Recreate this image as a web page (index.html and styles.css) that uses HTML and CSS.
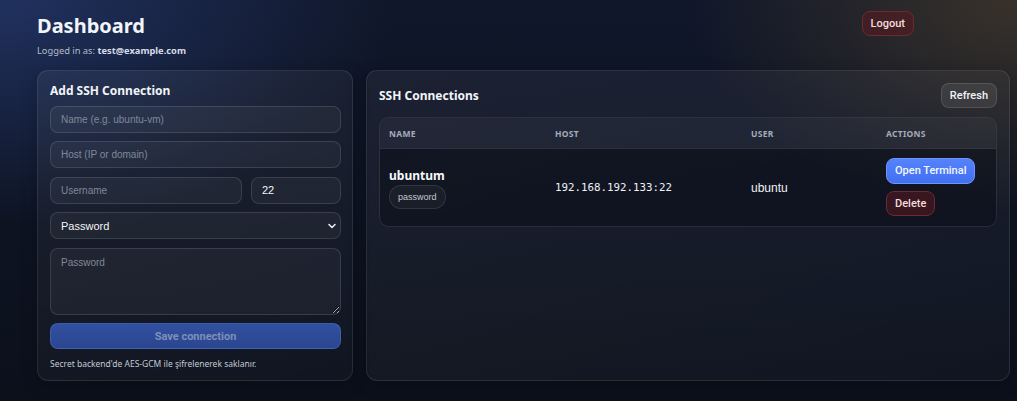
FILE: index.html
```html
<!DOCTYPE html>
<html lang="en">
<head>
    <meta charset="UTF-8">
    <meta name="viewport" content="width=device-width, initial-scale=1.0">
    <title>Dashboard</title>
    <link rel="stylesheet" href="styles.css">
</head>
<body>

    <div class="topbar">
        <div>
            <h1 class="title">Dashboard</h1>
            <div class="whoami">Logged in as: <b>test@example.com</b></div>
        </div>
        <button class="btn btn-danger logout">Logout</button>
    </div>

    <div class="layout">
        <!-- Form -->
        <div class="card form-card">
            <h2 class="card-title">Add SSH Connection</h2>
            <input class="field" type="text" placeholder="Name (e.g. ubuntu-vm)">
            <input class="field" type="text" placeholder="Host (IP or domain)">
            <div class="field-row">
                <input class="field" type="text" placeholder="Username">
                <input class="field port" type="text" value="22">
            </div>
            <div class="select-wrap">
                <select class="field">
                    <option>Password</option>
                    <option>Private key</option>
                </select>
                <svg class="chevron" width="10" height="10" viewBox="0 0 10 10"><path d="M2 3.5 L5 6.5 L8 3.5" fill="none" stroke="#e5e7eb" stroke-width="1.6" stroke-linecap="round" stroke-linejoin="round"/></svg>
            </div>
            <textarea class="field secret" placeholder="Password"></textarea>
            <button class="btn-save" disabled>Save connection</button>
            <p class="hint">Secret backend'de AES-GCM ile şifrelenerek saklanır.</p>
        </div>

        <!-- List -->
        <div class="card list-card">
            <div class="list-head">
                <h2 class="card-title">SSH Connections</h2>
                <button class="btn btn-ghost">Refresh</button>
            </div>
            <div class="table">
                <div class="t-row t-head">
                    <div>Name</div>
                    <div>Host</div>
                    <div>User</div>
                    <div>Actions</div>
                </div>
                <div class="t-row t-body">
                    <div>
                        <div class="conn-name">ubuntum</div>
                        <span class="pill">password</span>
                    </div>
                    <div class="mono">192.168.192.133:22</div>
                    <div class="user">ubuntu</div>
                    <div class="actions">
                        <button class="btn btn-primary">Open Terminal</button>
                        <button class="btn btn-danger">Delete</button>
                    </div>
                </div>
            </div>
        </div>
    </div>

</body>
</html>
```

FILE: styles.css
```css
html, body {
    height: 100%;
}

body {
    margin: 0;
    padding: 14px 8px 0 37px;
    box-sizing: border-box;
    font-family: 'Noto Sans', 'Open Sans', sans-serif;
    color: #e5e7eb;
    background:
        radial-gradient(ellipse 560px 320px at 0% 0%, rgba(38, 58, 112, 0.75), transparent 70%),
        radial-gradient(ellipse 440px 280px at 100% 0%, rgba(72, 60, 42, 0.72), transparent 75%),
        linear-gradient(180deg, #10172a 0%, #0b101b 100%);
    overflow: hidden;
}

button, input, select, textarea {
    font-family: 'Liberation Sans', Arial, sans-serif;
}

/* header */
.topbar {
    display: flex;
    justify-content: space-between;
    align-items: flex-start;
}

.title {
    margin: 0;
    font-size: 20px;
    line-height: 24px;
    font-weight: 700;
    color: #f1f5f9;
}

.whoami {
    margin-top: 6px;
    font-size: 9.3px;
    color: #b4bccb;
}

.whoami b {
    color: #d6dce6;
}

.logout {
    margin-top: -3px;
    margin-right: 95px;
}

/* layout */
.layout {
    display: grid;
    grid-template-columns: 316px 1fr;
    gap: 13px;
    margin-top: 13px;
    height: 311px;
}

.card {
    border: 1px solid rgba(255, 255, 255, 0.09);
    border-radius: 11px;
    background: linear-gradient(160deg, rgba(255, 255, 255, 0.055), rgba(255, 255, 255, 0.025));
    box-shadow: 0 4px 16px rgba(0, 0, 0, 0.25);
    box-sizing: border-box;
}

.card-title {
    margin: 0;
    font-size: 12px;
    line-height: 18px;
    font-weight: 700;
    color: #f1f5f9;
}

/* form */
.form-card {
    display: flex;
    flex-direction: column;
    gap: 8.5px;
    padding: 11px 11px 0 12px;
}

.form-card .card-title {
    margin-bottom: -3px;
}

.field {
    box-sizing: border-box;
    width: 100%;
    height: 27px;
    padding: 0 10px;
    border: 1px solid rgba(255, 255, 255, 0.12);
    border-radius: 8px;
    background: rgba(255, 255, 255, 0.045);
    color: #f1f5f9;
    font-size: 10px;
    outline: none;
}

.field::placeholder {
    color: #7f889a;
}

.port {
    font-size: 11px;
}

.field-row {
    display: grid;
    grid-template-columns: 1fr 90px;
    gap: 9px;
}

.select-wrap {
    position: relative;
}

.select-wrap select {
    appearance: none;
    -webkit-appearance: none;
    color: #f3f4f6;
    font-size: 11px;
}

.select-wrap option {
    background: #1a2030;
}

.chevron {
    position: absolute;
    right: 4px;
    top: 9px;
    pointer-events: none;
}

.secret {
    height: 67px;
    padding: 8px 10px;
    resize: vertical;
}

.btn-save {
    height: 26px;
    border: 1px solid rgba(96, 130, 220, 0.35);
    border-radius: 8px;
    background: linear-gradient(180deg, #3150a0, #2b4690);
    color: #7f8fb8;
    font-family: Roboto, 'Liberation Sans', sans-serif;
    font-size: 11px;
    font-weight: 700;
}

.hint {
    margin: 0;
    font-size: 8.5px;
    color: #c2c9d6;
}

/* list */
.list-card {
    padding: 12px 12px 0 12px;
    margin-right: -1px;
}

.list-head {
    display: flex;
    justify-content: space-between;
    align-items: center;
}

.table {
    margin-top: 9px;
    border: 1px solid rgba(255, 255, 255, 0.08);
    border-radius: 10px;
    overflow: hidden;
}

.t-row {
    display: grid;
    grid-template-columns: 166px 196px 135px 1fr;
    align-items: center;
}

.t-row > div {
    padding: 0 9px;
}

.t-head {
    height: 30px;
    background: rgba(255, 255, 255, 0.035);
    border-bottom: 1px solid rgba(255, 255, 255, 0.05);
    font-size: 8.5px;
    font-weight: 700;
    letter-spacing: 0.3px;
    text-transform: uppercase;
    color: #a4acba;
}

.t-body {
    height: 77px;
    background: rgba(8, 11, 20, 0.45);
    font-size: 12px;
}

.conn-name {
    font-size: 12px;
    font-weight: 700;
    color: #f8fafc;
}

.pill {
    display: inline-block;
    margin-top: 1px;
    padding: 6px 8px;
    border: 1px solid rgba(255, 255, 255, 0.1);
    border-radius: 12px;
    background: rgba(255, 255, 255, 0.04);
    font-family: 'Liberation Sans', Arial, sans-serif;
    font-size: 9px;
    color: #c3c9d4;
}

.mono {
    font-family: 'DejaVu Sans Mono', 'Liberation Mono', monospace;
    font-size: 10.8px;
    color: #eef1f6;
}

.user {
    font-family: 'Liberation Sans', Arial, sans-serif;
    font-size: 12px;
    color: #eef1f6;
}

.actions {
    display: flex;
    flex-direction: column;
    align-items: flex-start;
    gap: 7px;
    margin-top: -2px;
}

/* buttons */
.btn {
    height: 25px;
    padding: 0 8px;
    border-radius: 8px;
    font-family: Roboto, 'Liberation Sans', sans-serif;
    font-size: 11px;
    font-weight: 500;
    cursor: pointer;
}

.btn-danger {
    border: 1px solid #6e2a31;
    background: rgba(90, 25, 32, 0.55);
    color: #f5dcdc;
}

.btn-ghost {
    border: 1px solid rgba(255, 255, 255, 0.12);
    background: rgba(255, 255, 255, 0.08);
    color: #f1f5f9;
}

.btn-primary {
    height: 26px;
    border: 1px solid #6d95ff;
    background: linear-gradient(180deg, #5583fb, #416ff0);
    color: #f4f7ff;
}
```
